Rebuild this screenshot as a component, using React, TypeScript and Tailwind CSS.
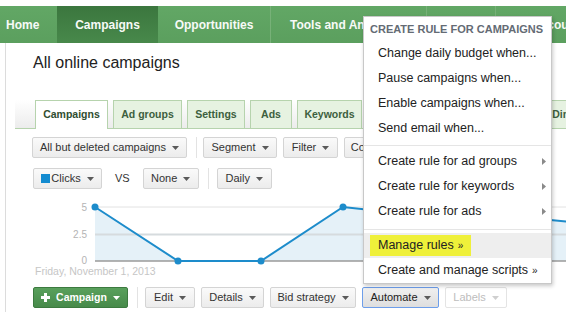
import React from 'react';

const Caret = ({ className = 'text-[#5a5a5a]' }: { className?: string }) => (
  <svg width="7" height="4" viewBox="0 0 7 4" className={`shrink-0 ${className}`}>
    <path d="M0 0h7L3.5 4z" fill="currentColor" />
  </svg>
);

const Btn: React.FC<{ w: string; children: React.ReactNode; tone?: 'plain' | 'active' | 'disabled' }> = ({
  w,
  children,
  tone = 'plain',
}) => {
  const look =
    tone === 'active'
      ? 'border-[#6d9eea] bg-gradient-to-b from-[#f0f0f0] to-[#dedede] text-[#222]'
      : tone === 'disabled'
        ? 'border-[#e4e4e4] bg-white text-[#bdbdbd]'
        : 'border-[#d4d4d4] bg-gradient-to-b from-[#fafafa] to-[#ececec] text-[#333]';
  return (
    <div
      className={`flex h-[21px] shrink-0 items-center justify-center gap-[6px] rounded-[2px] border text-[11px] ${look} ${w}`}
    >
      {children}
      <Caret className={tone === 'disabled' ? 'text-[#cfcfcf]' : 'text-[#5a5a5a]'} />
    </div>
  );
};

const Sep = () => <div className="h-[21px] w-px shrink-0 bg-[#e3e3e3]" />;

const tabs = [
  { label: 'Campaigns', w: 'w-[73px]', active: true },
  { label: 'Ad groups', w: 'w-[69px]' },
  { label: 'Settings', w: 'w-[58px]' },
  { label: 'Ads', w: 'w-[42px]' },
  { label: 'Keywords', w: 'w-[65px]' },
  { label: 'Audiences', w: 'w-[73px]' },
  { label: 'Ad extensions', w: 'w-[92px]' },
  { label: 'Dimensions', w: 'w-[80px]' },
];

const MenuItem: React.FC<{ children: React.ReactNode; sub?: boolean }> = ({ children, sub }) => (
  <div className="flex h-[25px] items-center justify-between pl-[14px] pr-[5px]">
    <span>{children}</span>
    {sub && (
      <svg width="4" height="7" viewBox="0 0 4 7" className="text-[#8a8a8a]">
        <path d="M0 0l4 3.5L0 7z" fill="currentColor" />
      </svg>
    )}
  </div>
);

export default function App() {
  return (
    <div className="relative h-[312px] w-[566px] overflow-hidden bg-white font-['Liberation_Sans',Arial,sans-serif] text-[#222]">
      <div className="h-[6px]" />

      {/* top nav */}
      <nav className="flex h-[37px] bg-gradient-to-b from-[#62a765] to-[#5b9f5e] text-[12px] font-bold text-[#f7faf7]">
        <div className="flex w-[57px] shrink-0 items-center pl-[6px]">Home</div>
        <div className="flex w-[101px] shrink-0 items-center justify-center bg-gradient-to-b from-[#3b763e] to-[#48894b]">
          Campaigns
        </div>
        <div className="flex w-[112px] shrink-0 items-center justify-center">Opportunities</div>
        <div className="flex w-[156px] shrink-0 items-center border-l border-[#77b178] pl-[19px]">
          Tools and Analysis
        </div>
        <div className="flex w-[69px] shrink-0 items-center justify-center border-l border-[#77b178]">Billing</div>
        <div className="flex shrink-0 items-center border-l border-[#77b178] pl-[18px]">My account</div>
      </nav>

      <div className="ml-[5px] h-[269px] border-l border-[#dcdcdc]">
        <h1 className="pl-[27px] pt-[11px] text-[16px] font-normal leading-[18px] text-[#222]">All online campaigns</h1>

        {/* tabs */}
        <div className="ml-[9px] mt-[28px] flex h-[29px] items-start gap-[5px] border-b border-[#b6d3ad] bg-gradient-to-b from-white to-[#ececec] pl-[20px]">
          {tabs.map((t) => (
            <div
              key={t.label}
              className={`flex shrink-0 items-center justify-center border border-b-0 border-[#b6d3ad] text-[10.5px] font-bold ${t.w} ${
                t.active ? 'h-[29px] bg-white text-[#2f4d30]' : 'h-[28px] bg-[#e6f2e1] text-[#3d5f3e]'
              }`}
            >
              {t.label}
            </div>
          ))}
        </div>

        {/* filter row */}
        <div className="ml-[26px] mt-[8px] flex items-center">
          <Btn w="w-[155px]">All but deleted campaigns</Btn>
          <div className="ml-[9px] mr-[6px]">
            <Sep />
          </div>
          <Btn w="w-[74px]">Segment</Btn>
          <div className="w-[6px]" />
          <Btn w="w-[55px]">Filter</Btn>
          <div className="w-[6px]" />
          <Btn w="w-[70px]">Columns</Btn>
        </div>

        {/* metric row */}
        <div className="ml-[27px] mt-[10px] flex items-center">
          <Btn w="w-[69px]">
            <span className="flex items-center gap-[1px]">
              <span className="h-[9px] w-[9px] bg-[#138bd0]" />
              Clicks
            </span>
          </Btn>
          <span className="ml-[13px] mr-[13px] text-[11px] text-[#333]">VS</span>
          <Btn w="w-[56px]">None</Btn>
          <div className="ml-[9px] mr-[8px]">
            <Sep />
          </div>
          <Btn w="w-[55px]">Daily</Btn>
        </div>

        {/* chart */}
        <svg width="560" height="68" className="mt-[7px] block overflow-visible">
          <path
            d="M89 65V11L172 65H255L337 11L420 20L503 20L586 28V65Z"
            fill="#e5f1f8"
          />
          <line x1="89" y1="11" x2="560" y2="11" stroke="#e2e2e2" strokeWidth="1" />
          <line x1="89" y1="38.5" x2="560" y2="38.5" stroke="#d6dbde" strokeWidth="2" />
          <line x1="89" y1="65" x2="560" y2="65" stroke="#9a9a9a" strokeWidth="1.5" />
          <path
            d="M89 11L172 65H255L337 11L420 20L503 20L586 28"
            fill="none"
            stroke="#1d8ccb"
            strokeWidth="2"
          />
          {[
            [89, 11],
            [172, 65],
            [255, 65],
            [337, 11],
          ].map(([x, y]) => (
            <circle key={x} cx={x} cy={y} r="3.5" fill="#1d8ccb" />
          ))}
          <g fill="#b4b4b4" fontSize="10" textAnchor="end" fontFamily="Liberation Sans, Arial, sans-serif">
            <text x="81" y="15">5</text>
            <text x="81" y="42">2.5</text>
            <text x="81" y="68">0</text>
          </g>
        </svg>
        <div className="h-[12px] pl-[29px] pt-[1px] text-[10.5px] leading-[12px] text-[#c6c6c6]">Friday, November 1, 2013</div>

        {/* action row */}
        <div className="ml-[27px] mt-[11px] flex items-center">
          <div className="flex h-[21px] w-[95px] shrink-0 items-center justify-center gap-[6px] rounded-[2px] border border-[#3c7a3f] bg-gradient-to-b from-[#59a05c] to-[#478a4a] text-[10.5px] font-bold text-white">
            <svg width="9" height="9" viewBox="0 0 9 9">
              <path d="M3 0h3v3h3v3H6v3H3V6H0V3h3z" fill="#fff" />
            </svg>
            Campaign
            <Caret className="text-white" />
          </div>
          <div className="ml-[9px] mr-[7px]">
            <Sep />
          </div>
          <Btn w="w-[50px]">Edit</Btn>
          <div className="w-[6px]" />
          <Btn w="w-[63px]">Details</Btn>
          <div className="w-[6px]" />
          <Btn w="w-[86px]">Bid strategy</Btn>
          <div className="w-[6px]" />
          <Btn w="w-[77px]" tone="active">
            Automate
          </Btn>
          <div className="w-[6px]" />
          <Btn w="w-[62px]" tone="disabled">
            Labels
          </Btn>
        </div>
      </div>

      {/* automate dropdown */}
      <div className="absolute left-[363px] top-[16px] h-[268px] w-[189px] border border-[#c8c8c8] bg-white text-[12.5px] text-[#222] shadow-[1px_2px_4px_rgba(0,0,0,0.22)]">
        <div className="flex h-[24px] items-center pl-[6px] text-[11px] font-bold text-[#646b74]">
          CREATE RULE FOR CAMPAIGNS
        </div>
        <MenuItem>Change daily budget when...</MenuItem>
        <MenuItem>Pause campaigns when...</MenuItem>
        <MenuItem>Enable campaigns when...</MenuItem>
        <MenuItem>Send email when...</MenuItem>
        <div className="mb-[3px] mt-[4px] h-px bg-[#e5e5e5]" />
        <MenuItem sub>Create rule for ad groups</MenuItem>
        <MenuItem sub>Create rule for keywords</MenuItem>
        <MenuItem sub>Create rule for ads</MenuItem>
        <div className="mb-[3px] mt-[5px] h-px bg-[#e5e5e5]" />
        <div className="flex h-[25px] items-center bg-[#eeeeee] pl-[6px]">
          <span className="flex h-[21px] items-center bg-[#eff03a] px-[8px]">
            Manage rules<span className="ml-[4px] text-[10px]">»</span>
          </span>
        </div>
        <div className="flex h-[25px] items-center pl-[14px]">
          Create and manage scripts<span className="ml-[4px] text-[10px]">»</span>
        </div>
      </div>
    </div>
  );
}
